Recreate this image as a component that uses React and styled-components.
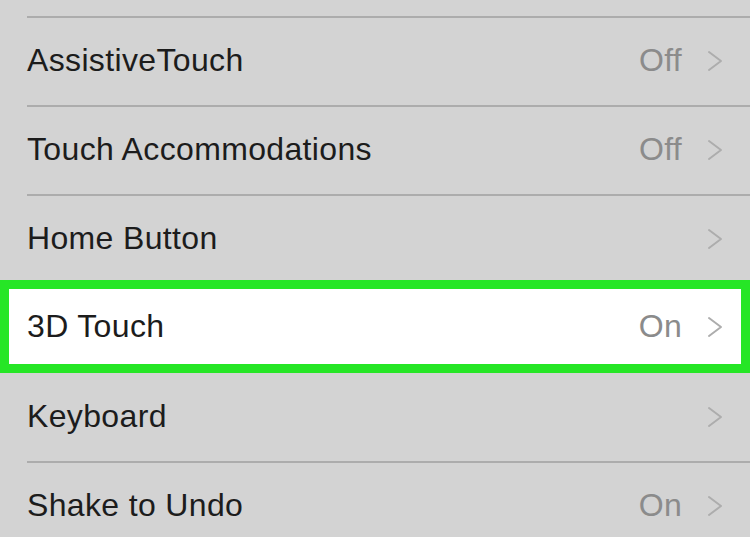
import React from "react";
import styled, { createGlobalStyle } from "styled-components";

const Global = createGlobalStyle`
  html, body { margin: 0; padding: 0; background: #d3d3d3; }
  body { font-family: "Liberation Sans", Arial, sans-serif; overflow: hidden; }
`;

const Page = styled.div`
  width: 750px;
  height: 537px;
  background: #d3d3d3;
  overflow: hidden;
  padding-top: 16px;
  box-sizing: border-box;
`;

const Row = styled.div`
  position: relative;
  height: 89px;
  box-sizing: border-box;
  display: flex;
  align-items: center;
  padding: 0 26px 0 27px;
  &::before {
    content: "";
    display: ${(p) => (p.$noSep ? "none" : "block")};
    position: absolute;
    top: 0;
    left: 27px;
    right: 0;
    height: 2px;
    background: #acacac;
  }
`;

const HighlightRow = styled.div`
  position: relative;
  z-index: 1;
  height: 93px;
  margin: -3px 0 -1px;
  box-sizing: border-box;
  border: 9px solid #26e626;
  background: #ffffff;
  display: flex;
  align-items: center;
  padding: 0 17px 0 18px;
`;

const Label = styled.span`
  flex: 1;
  font-size: 32px;
  letter-spacing: 0.35px;
  color: #1c1c1c;
  white-space: nowrap;
`;

const Value = styled.span`
  font-size: 32px;
  letter-spacing: 0.3px;
  color: #8b8b8b;
  margin-right: 25px;
`;

const ChevronWrap = styled.span`
  display: flex;
  width: 17px;
  height: 22px;
`;

const Chevron = () => (
  <ChevronWrap>
    <svg width="17" height="22" viewBox="0 0 17 22">
      <polyline
        points="2,2 14,11 2,20"
        fill="none"
        stroke="#adadad"
        strokeWidth="2"
        strokeLinecap="round"
        strokeLinejoin="round"
      />
    </svg>
  </ChevronWrap>
);

const rows = [
  { label: "AssistiveTouch", value: "Off" },
  { label: "Touch Accommodations", value: "Off" },
  { label: "Home Button", value: "" },
  { label: "3D Touch", value: "On", highlight: true },
  { label: "Keyboard", value: "" },
  { label: "Shake to Undo", value: "On" },
];

export default function App() {
  return (
    <>
      <Global />
      <Page>
        {rows.map((r, i) => {
          const content = (
            <>
              <Label>{r.label}</Label>
              {r.value && <Value>{r.value}</Value>}
              <Chevron />
            </>
          );
          if (r.highlight) return <HighlightRow key={i}>{content}</HighlightRow>;
          const afterHighlight = i > 0 && rows[i - 1].highlight;
          return (
            <Row key={i} $noSep={afterHighlight}>
              {content}
            </Row>
          );
        })}
      </Page>
    </>
  );
}
